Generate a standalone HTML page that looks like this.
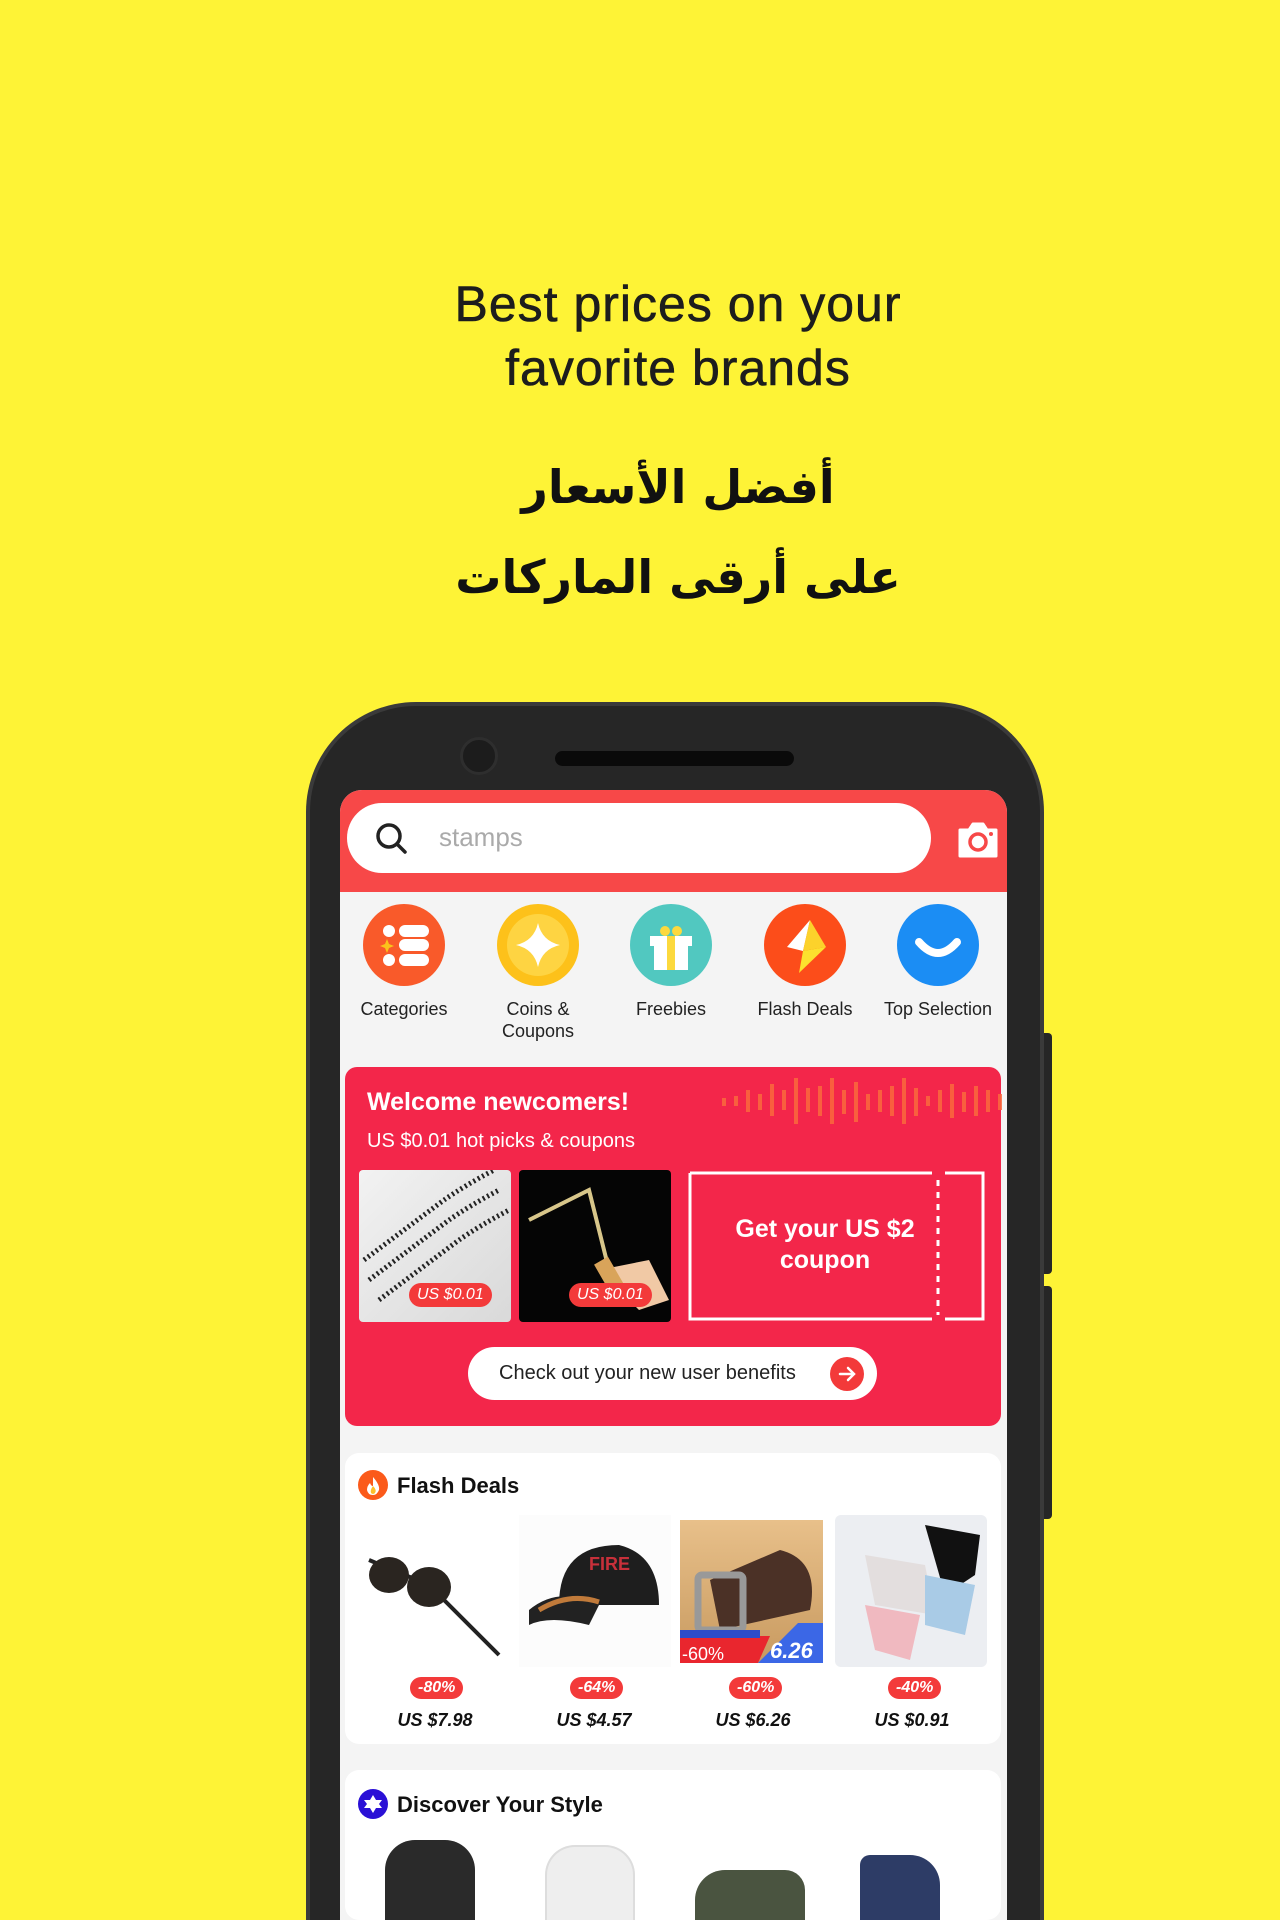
<!DOCTYPE html>
<html><head><meta charset="utf-8"><style>
*{margin:0;padding:0;box-sizing:border-box}
html{width:1280px;height:1920px;overflow:hidden}
body{width:1280px;height:1920px;background:#fef336;position:relative;overflow:hidden;font-family:"Liberation Sans","DejaVu Sans",sans-serif}
#wrap{position:absolute;left:0;top:0;width:1280px;height:1920px;overflow:hidden}
.abs{position:absolute}
.h1{left:0;width:1356px;text-align:center;font-size:50px;color:#1d1d1d;letter-spacing:1px;-webkit-text-stroke:0.6px #1d1d1d}
.ar{left:0;width:1356px;text-align:center;font-size:46px;font-weight:bold;color:#111;font-family:"DejaVu Sans",sans-serif}
.phone{left:306px;top:702px;width:738px;height:1218px;background:#262626;border-radius:110px 110px 0 0;border:4px solid #3a3a3a;border-bottom:none}
.screen{left:340px;top:790px;width:667px;height:1130px;background:#f4f4f4;border-radius:22px 22px 0 0;overflow:hidden}
.ic{width:82px;height:82px;border-radius:50%;top:114px}
.lbl{top:208px;width:140px;text-align:center;font-size:18px;color:#222;line-height:22px}
.card{background:#fff;border-radius:14px}
.badge{background:#f33a3a;color:#fff;font-style:italic;font-size:16px;border-radius:12px;padding:2px 8px;font-weight:bold}
.price{font-style:italic;font-weight:bold;font-size:18px;color:#111;width:160px;text-align:center}
</style></head><body><div id="wrap">
<div class="abs h1" style="top:275px">Best prices on your</div>
<div class="abs h1" style="top:339px">favorite brands</div>
<div class="abs ar" style="top:460px" dir="rtl">أفضل الأسعار</div>
<div class="abs ar" style="top:550px" dir="rtl">على أرقى الماركات</div>

<div class="abs" style="left:1044px;top:1033px;width:8px;height:241px;background:#262626;border-radius:0 4px 4px 0"></div>
<div class="abs" style="left:1044px;top:1286px;width:8px;height:233px;background:#262626;border-radius:0 4px 4px 0"></div>
<div class="abs phone"></div>
<div class="abs" style="left:555px;top:751px;width:239px;height:15px;background:#0a0a0a;border-radius:8px"></div>
<div class="abs" style="left:460px;top:737px;width:38px;height:38px;background:#1c1c1c;border-radius:50%;border:3px solid #2e2e2e"></div>

<div class="abs screen">
  <div class="abs" style="left:0;top:0;width:667px;height:102px;background:#f74848"></div>
  <div class="abs" style="left:7px;top:13px;width:584px;height:70px;background:#fff;border-radius:35px"></div>
  <svg class="abs" style="left:34px;top:31px" width="36" height="36" viewBox="0 0 36 36"><circle cx="15" cy="15" r="11" fill="none" stroke="#222" stroke-width="3.5"/><line x1="23" y1="23" x2="31" y2="31" stroke="#222" stroke-width="3.5" stroke-linecap="round"/></svg>
  <div class="abs" style="left:99px;top:32px;font-size:26px;color:#aaa">stamps</div>
  <svg class="abs" style="left:616px;top:30px" width="44" height="40" viewBox="0 0 44 40"><path d="M4 10h9l4-6h10l4 6h9v26H4z" fill="#fff" stroke="#fff" stroke-width="3" stroke-linejoin="round"/><circle cx="22" cy="22" r="8" fill="none" stroke="#f74848" stroke-width="3.5"/><circle cx="35" cy="14" r="2" fill="#f74848"/></svg>

  <div class="abs ic" style="left:23px;top:114px;background:#f95a2a"></div>
  <svg class="abs" style="left:23px;top:114px" width="82" height="82" viewBox="0 0 82 82"><circle cx="26" cy="27" r="6" fill="#fff"/><circle cx="26" cy="56" r="6" fill="#fff"/><rect x="36" y="21" width="30" height="12" rx="6" fill="#fff"/><rect x="36" y="35" width="30" height="12" rx="6" fill="#fff"/><rect x="36" y="50" width="30" height="12" rx="6" fill="#fff"/><path d="M24 35l2 5 5 2-5 2-2 5-2-5-5-2 5-2z" fill="#fbc21b"/></svg>
  <div class="abs ic" style="left:157px;background:#fdc11a"></div>
  <svg class="abs" style="left:157px;top:114px" width="82" height="82" viewBox="0 0 82 82"><circle cx="41" cy="41" r="31" fill="#fed442"/><path d="M41 19q4 18 22 22q-18 4-22 22q-4-18-22-22q18-4 22-22z" fill="#fff"/></svg>
  <div class="abs ic" style="left:290px;background:#51c8c0"></div>
  <svg class="abs" style="left:290px;top:114px" width="82" height="82" viewBox="0 0 82 82"><rect x="20" y="32" width="42" height="10" fill="#fff"/><rect x="24" y="42" width="34" height="24" fill="#fff"/><rect x="37" y="32" width="8" height="34" fill="#fcd93d"/><circle cx="35" cy="27" r="5" fill="#fcd93d"/><circle cx="47" cy="27" r="5" fill="#fcd93d"/></svg>
  <div class="abs ic" style="left:424px;background:#fc4d1a"></div>
  <svg class="abs" style="left:424px;top:114px" width="82" height="82" viewBox="0 0 82 82"><path d="M46 16L23 43l16 4z" fill="#fff"/><path d="M39 47l23 -4l-27 26z" fill="#fce12e"/><path d="M46 16l-7 31 23-4z" fill="#fce12e" opacity=".9"/></svg>
  <div class="abs ic" style="left:557px;background:#1b8df4"></div>
  <svg class="abs" style="left:557px;top:114px" width="82" height="82" viewBox="0 0 82 82"><path d="M22 38q19 22 38 0" fill="none" stroke="#fff" stroke-width="8" stroke-linecap="round"/></svg>
  <div class="abs lbl" style="left:-6px">Categories</div>
  <div class="abs lbl" style="left:128px">Coins &amp;<br>Coupons</div>
  <div class="abs lbl" style="left:261px">Freebies</div>
  <div class="abs lbl" style="left:395px">Flash Deals</div>
  <div class="abs lbl" style="left:530px;width:136px">Top Selection</div>

  <div class="abs" style="left:5px;top:277px;width:656px;height:359px;background:#f3264a;border-radius:12px"></div>
  <svg class="abs" style="left:380px;top:286px" width="285" height="50" viewBox="0 0 285 50"><g fill="#fb6a3c" opacity=".85">
  <rect x="2" y="22" width="4" height="8"/><rect x="14" y="20" width="4" height="10"/><rect x="26" y="14" width="4" height="22"/><rect x="38" y="18" width="4" height="16"/><rect x="50" y="8" width="4" height="32"/><rect x="62" y="14" width="4" height="20"/><rect x="74" y="2" width="4" height="46"/><rect x="86" y="12" width="4" height="24"/><rect x="98" y="10" width="4" height="30"/><rect x="110" y="2" width="4" height="46"/><rect x="122" y="14" width="4" height="24"/><rect x="134" y="6" width="4" height="40"/><rect x="146" y="18" width="4" height="16"/><rect x="158" y="14" width="4" height="22"/><rect x="170" y="10" width="4" height="30"/><rect x="182" y="2" width="4" height="46"/><rect x="194" y="12" width="4" height="28"/><rect x="206" y="20" width="4" height="10"/><rect x="218" y="14" width="4" height="22"/><rect x="230" y="8" width="4" height="34"/><rect x="242" y="16" width="4" height="20"/><rect x="254" y="10" width="4" height="30"/><rect x="266" y="14" width="4" height="22"/><rect x="278" y="18" width="4" height="16"/></g></svg>
  <div class="abs" style="left:27px;top:298px;color:#fff;font-weight:bold;font-size:25px">Welcome newcomers!</div>
  <div class="abs" style="left:27px;top:340px;color:#fff;font-size:20px">US $0.01 hot picks &amp; coupons</div>
  <div class="abs" style="left:19px;top:380px;width:152px;height:152px;background:linear-gradient(135deg,#f2f2f2,#d9d9d9);border-radius:4px;overflow:hidden">
    <svg width="152" height="152"><g stroke="#222" stroke-width="5" fill="none" stroke-dasharray="2 3"><path d="M10 110q40-30 80-60q20-14 50-30"/><path d="M20 130q40-30 80-60q20-14 50-30"/><path d="M5 90q40-30 80-60q20-14 50-30"/></g></svg></div>
  <div class="abs" style="left:179px;top:380px;width:152px;height:152px;background:#050505;border-radius:4px;overflow:hidden">
    <svg width="152" height="152"><path d="M10 50L70 20L90 100" fill="none" stroke="#d8c68a" stroke-width="4"/><path d="M80 100l40 40l30 -10l-20-40z" fill="#f1c9a5"/><rect x="84" y="88" width="16" height="40" fill="#d9a45a" transform="rotate(-30 92 108)"/></svg></div>
  <div class="abs badge" style="left:69px;top:493px;font-weight:normal;border-radius:14px;padding:3px 8px">US $0.01</div>
  <div class="abs badge" style="left:229px;top:493px;font-weight:normal;border-radius:14px;padding:3px 8px">US $0.01</div>
  <svg class="abs" style="left:347px;top:380px" width="298" height="152" viewBox="0 0 298 152"><path d="M3 3H245M258 3H296V149H258M245 149H3V3" fill="none" stroke="#fff" stroke-width="3"/><path d="M3 3v146" fill="none" stroke="#fff" stroke-width="3" stroke-dasharray="6 4"/><path d="M251 10V145" stroke="#fff" stroke-width="3" stroke-dasharray="6 6"/><path d="M296 3v146" stroke="#fff" stroke-width="3" stroke-dasharray="6 4"/></svg>
  <div class="abs" style="left:360px;top:424px;width:250px;text-align:center;color:#fff;font-weight:bold;font-size:25px;line-height:31px">Get your US $2<br>coupon</div>
  <div class="abs" style="left:128px;top:557px;width:409px;height:53px;background:#fff;border-radius:27px"></div>
  <div class="abs" style="left:159px;top:572px;font-size:20px;color:#222">Check out your new user benefits</div>
  <div class="abs" style="left:490px;top:567px;width:34px;height:34px;border-radius:50%;background:#f33a3a"></div>
  <svg class="abs" style="left:490px;top:567px" width="34" height="34" viewBox="0 0 34 34"><path d="M10 17h14M18 11l6 6-6 6" fill="none" stroke="#fff" stroke-width="2.5" stroke-linecap="round"/></svg>

  <div class="abs card" style="left:5px;top:663px;width:656px;height:291px"></div>
  <div class="abs" style="left:18px;top:680px;width:30px;height:30px;border-radius:50%;background:#fb5a1a"></div>
  <svg class="abs" style="left:18px;top:680px" width="30" height="30" viewBox="0 0 30 30"><path d="M15 7q7 8 6 13q-2 5-6 5q-5 0-6-5q0-4 3-7q1 3 3 3q0-5 0-9z" fill="#fff"/><path d="M15 16q4 4 2 7q-2 2-4 0q-1-3 2-7z" fill="#fdbf2a"/></svg>
  <div class="abs" style="left:57px;top:683px;font-weight:bold;font-size:22px;color:#111">Flash Deals</div>
  <div class="abs" style="left:19px;top:725px;width:152px;height:152px;background:#fff">
    <svg width="152" height="152"><path d="M10 45l60 25l70 70" fill="none" stroke="#222" stroke-width="4"/><ellipse cx="30" cy="60" rx="20" ry="18" fill="#2a2520"/><ellipse cx="70" cy="72" rx="22" ry="20" fill="#2a2520"/></svg></div>
  <div class="abs" style="left:179px;top:725px;width:152px;height:152px;background:#fcfcfc">
    <svg width="152" height="152"><path d="M40 90q0-60 60-60q40 10 40 60z" fill="#1e1e1e"/><path d="M10 95q30-25 70-5l-10 20q-40-10-60 0z" fill="#222"/><path d="M20 95q30-18 60-8" stroke="#c07a3a" stroke-width="5" fill="none"/><text x="70" y="55" fill="#c8303a" font-size="18" font-weight="bold" font-family="Liberation Sans">FIRE</text></svg></div>
  <div class="abs" style="left:340px;top:730px;width:143px;height:143px;background:linear-gradient(#e8c08a,#c89a60);overflow:hidden">
    <svg width="143" height="143"><path d="M30 60l70-30q40 10 30 60l-90 20z" fill="#4b3126"/><rect x="18" y="55" width="45" height="55" rx="4" fill="none" stroke="#999" stroke-width="7"/><path d="M0 116h90l-12 27H0z" fill="#e9262e"/><path d="M0 110h80v8H0z" fill="#2d4cc8"/><path d="M78 143l40-40h25v40z" fill="#3b67e6"/><text x="90" y="138" fill="#fff" font-size="22" font-style="italic" font-weight="bold" font-family="Liberation Sans">6.26</text><text x="2" y="140" fill="#fff" font-size="18" font-family="Liberation Sans">-60%</text></svg></div>
  <div class="abs" style="left:495px;top:725px;width:152px;height:152px;background:#eceef2;border-radius:6px;overflow:hidden">
    <svg width="152" height="152"><path d="M90 10l55 10l-5 40l-30 20z" fill="#111"/><path d="M30 40l60 10l10 50l-60 -10z" fill="#e3dede"/><path d="M90 60l50 10l-10 50l-40-10z" fill="#a9cbe6"/><path d="M30 90l55 10l-10 45l-35-10z" fill="#f0b9c0"/></svg></div>
  <div class="abs badge" style="left:70px;top:887px">-80%</div>
  <div class="abs badge" style="left:230px;top:887px">-64%</div>
  <div class="abs badge" style="left:389px;top:887px">-60%</div>
  <div class="abs badge" style="left:548px;top:887px">-40%</div>
  <div class="abs price" style="left:15px;top:920px">US $7.98</div>
  <div class="abs price" style="left:174px;top:920px">US $4.57</div>
  <div class="abs price" style="left:333px;top:920px">US $6.26</div>
  <div class="abs price" style="left:492px;top:920px">US $0.91</div>

  <div class="abs card" style="left:5px;top:980px;width:656px;height:150px"></div>
  <div class="abs" style="left:18px;top:999px;width:30px;height:30px;border-radius:50%;background:#2a10d6"></div>
  <svg class="abs" style="left:18px;top:999px" width="30" height="30" viewBox="0 0 30 30"><path d="M15 6l3 5h6l-3 4 3 4h-6l-3 5-3-5H6l3-4-3-4h6z" fill="#fff"/></svg>
  <div class="abs" style="left:57px;top:1002px;font-weight:bold;font-size:22px;color:#111">Discover Your Style</div>
  <div class="abs" style="left:45px;top:1050px;width:90px;height:80px;background:#2a2a2a;border-radius:30px 30px 0 0"></div>
  <div class="abs" style="left:205px;top:1055px;width:90px;height:75px;background:#eee;border-radius:30px 30px 0 0;border:2px solid #ddd;border-bottom:none"></div>
  <div class="abs" style="left:355px;top:1080px;width:110px;height:50px;background:#4a5440;border-radius:30px 20px 0 0"></div>
  <div class="abs" style="left:520px;top:1065px;width:80px;height:65px;background:#2d3c66;border-radius:10px 30px 0 0"></div>
</div>
</div></body></html>
